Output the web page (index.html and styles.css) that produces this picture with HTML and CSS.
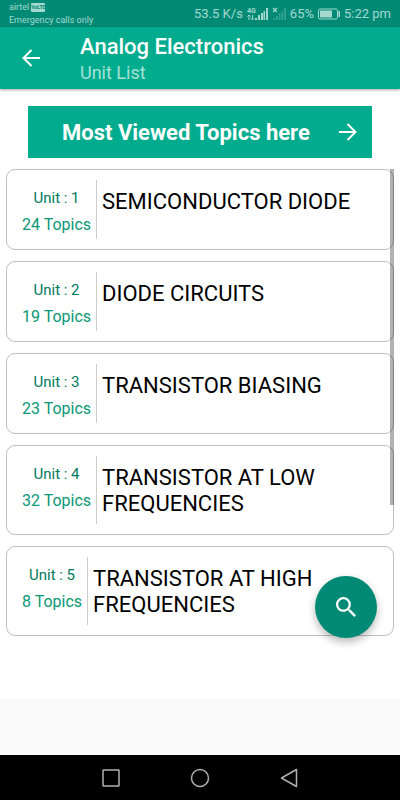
FILE: index.html
```html
<!DOCTYPE html>
<html lang="en">
<head>
<meta charset="utf-8">
<meta name="viewport" content="width=device-width, initial-scale=1">
<title>Analog Electronics</title>
<link rel="stylesheet" href="styles.css">
</head>
<body>
<div class="status">
  <div class="carrier">
    <div class="carrier-name">airtel <span class="volte">VoLTE</span></div>
    <div>Emergency calls only</div>
  </div>
  <div class="indicators">
    <span>53.5 K/s</span>
    <svg class="signal" width="21" height="14" viewBox="0 0 21 14" aria-hidden="true">
      <text x="0" y="6" class="network">4G</text>
      <path d="M2 13V8M0.500 9.500L2 8l1.500 1.500M5.500 8v5M4 11.500L5.500 13 7 11.500" fill="none" stroke="currentColor"/>
      <path d="M8 11h2v2H8zM11 8h2v5h-2zM14 6h2v7h-2zM16.500 4h1.500v9h-1.500zM19 1h2v12h-2z" fill="currentColor"/>
    </svg>
    <svg class="signal" width="14" height="14" viewBox="0 0 14 14" aria-hidden="true">
      <path d="M1 1l4 4M5 1L1 5" stroke="currentColor" stroke-width="1.300"/>
      <path d="M1 11h2v2H1zM4 9h2v4H4zM7 6h1.500v7H7zM9.500 4h1.500v9H9.500zM12 1h2v12h-2z" fill="currentColor" opacity=".3"/>
    </svg>
    <span>65%</span>
    <svg class="battery" width="22" height="12" viewBox="0 0 22 12" aria-hidden="true">
      <rect x=".5" y="1" width="19" height="10" rx="1.500" fill="none" stroke="currentColor"/>
      <path d="M2 2.500h12v7H2zM20.500 3H22v6h-1.500z" fill="currentColor"/>
    </svg>
    <span>5:22 pm</span>
  </div>
</div>
<header class="appbar">
  <button class="back" type="button" aria-label="Back">
    <svg width="18" height="18" viewBox="0 0 18 18" aria-hidden="true"><path d="M18 9H2M9.500 1L1.500 9l8 8" fill="none" stroke="currentColor" stroke-width="2"/></svg>
  </button>
  <div>
    <h1>Analog Electronics</h1>
    <p class="subtitle">Unit List</p>
  </div>
</header>
<main>
  <a class="banner" href="#units">
    <span>Most Viewed Topics here</span>
    <svg width="18" height="18" viewBox="0 0 18 18" aria-hidden="true"><path d="M0 9h16M8.500 1l8 8-8 8" fill="none" stroke="currentColor" stroke-width="2"/></svg>
  </a>
  <div class="list" id="units">
    <article class="card"><div class="meta"><span class="unit">Unit : 1</span><span>24 Topics</span></div><h2>SEMICONDUCTOR DIODE</h2></article>
    <article class="card"><div class="meta"><span class="unit">Unit : 2</span><span>19 Topics</span></div><h2>DIODE CIRCUITS</h2></article>
    <article class="card"><div class="meta"><span class="unit">Unit : 3</span><span>23 Topics</span></div><h2>TRANSISTOR BIASING</h2></article>
    <article class="card"><div class="meta"><span class="unit">Unit : 4</span><span>32 Topics</span></div><h2>TRANSISTOR AT LOW FREQUENCIES</h2></article>
    <article class="card"><div class="meta"><span class="unit">Unit : 5</span><span>8 Topics</span></div><h2>TRANSISTOR AT HIGH FREQUENCIES</h2></article>
    <div class="scrollbar"></div>
  </div>
  <button class="fab" type="button" aria-label="Search">
    <svg width="20" height="20" viewBox="3 3 17.500 17.500" aria-hidden="true"><path fill="currentColor" d="M15.500 14h-.79l-.28-.27A6.471 6.471 0 0 0 16 9.500 6.500 6.500 0 1 0 9.500 16c1.610 0 3.090-.59 4.230-1.570l.27.28v.79l5 4.990L20.490 19l-4.990-5zm-6 0C7.010 14 5 11.990 5 9.500S7.010 5 9.500 5 14 7.010 14 9.500 11.990 14 9.500 14z"/></svg>
  </button>
</main>
<footer class="ad"></footer>
<nav class="navbar">
  <button type="button" aria-label="Recent apps"><svg width="20" height="20" viewBox="0 0 20 20"><rect x="2" y="2" width="16" height="16" rx=".5" fill="none" stroke="currentColor" stroke-width="1.500"/></svg></button>
  <button type="button" aria-label="Home"><svg width="20" height="20" viewBox="0 0 20 20"><circle cx="10" cy="10" r="8.500" fill="none" stroke="currentColor" stroke-width="1.500"/></svg></button>
  <button type="button" aria-label="Go back"><svg width="20" height="20" viewBox="0 0 20 20"><path d="M17.500 1.500v17L2.500 10z" fill="none" stroke="currentColor" stroke-width="1.500" stroke-linejoin="round"/></svg></button>
</nav>
</body>
</html>
```
FILE: styles.css
```css
* { box-sizing: border-box; }
body {
  margin: 0;
  min-height: 100vh;
  display: flex;
  flex-direction: column;
  background: #fff;
  font-family: Roboto, "Liberation Sans", sans-serif;
}
h1, h2, p { margin: 0; }
button {
  padding: 0;
  border: 0;
  background: none;
  color: inherit;
  display: flex;
  align-items: center;
  justify-content: center;
}
svg { display: block; flex: none; }
.status {
  height: 27px;
  padding: 0 9px;
  display: flex;
  justify-content: space-between;
  background: #008a75;
  color: #a3d9cf;
}
.carrier {
  padding-top: 1px;
  font-size: 9px;
  line-height: 13px;
}
.carrier-name {
  display: flex;
  align-items: center;
  gap: 2px;
}
.volte {
  border-radius: 1px;
  background: #a3d9cf;
  color: #008a75;
  font-size: 5px;
  font-weight: 700;
  line-height: 9px;
}
.indicators {
  display: flex;
  align-items: center;
  gap: 4px;
  font-size: 13px;
}
.network {
  font-size: 7px;
  font-weight: 700;
  fill: currentColor;
}
.appbar {
  position: relative;
  height: 62px;
  padding-left: 22px;
  display: flex;
  align-items: center;
  gap: 40px;
  background: #00ab8e;
  color: #fff;
  box-shadow: 0 1px 3px rgba(0, 0, 0, .35);
}
h1 {
  padding-top: 2px;
  font-size: 22px;
  font-weight: 500;
  line-height: 27px;
}
.subtitle {
  color: #a6e2d6;
  font-size: 18px;
  line-height: 26px;
}
main {
  position: relative;
  flex: 1;
}
.banner {
  height: 52px;
  margin: 17px 28px 11px;
  padding: 0 15px 0 34px;
  display: flex;
  align-items: center;
  justify-content: space-between;
  background: #00ab8e;
  color: #fff;
  font-size: 22px;
  font-weight: 700;
  text-decoration: none;
}
.list {
  position: relative;
  padding: 0 6px;
  display: flex;
  flex-direction: column;
  gap: 11px;
}
.card {
  min-height: 81px;
  padding: 10px 15px;
  display: flex;
  border: 1px solid #bfbfbf;
  border-radius: 9px;
}
.meta {
  flex: none;
  padding: 8px 5px 0 0;
  display: flex;
  flex-direction: column;
  align-items: center;
  gap: 7px;
  border-right: 1px solid #ccc;
  color: #089876;
  font-size: 16px;
  line-height: 20px;
}
.unit {
  color: #007a5e;
  font-size: 15px;
}
h2 {
  padding: 9px 0 7px 5px;
  color: #000;
  font-size: 22px;
  font-weight: 400;
  line-height: 26px;
}
.scrollbar {
  position: absolute;
  top: 0;
  right: 6px;
  width: 4px;
  height: 72%;
  background: rgba(0, 0, 0, .3);
}
.fab {
  position: absolute;
  right: 23px;
  bottom: 61px;
  width: 62px;
  height: 62px;
  border-radius: 50%;
  background: #008a75;
  color: #fff;
  box-shadow: 0 4px 8px rgba(0, 0, 0, .28);
}
.ad {
  height: 56px;
  background: #fafafa;
}
.navbar {
  height: 45px;
  padding: 0 67px;
  display: grid;
  grid-template-columns: repeat(3, 1fr);
  background: #000;
  color: #b0b0b0;
}
```
